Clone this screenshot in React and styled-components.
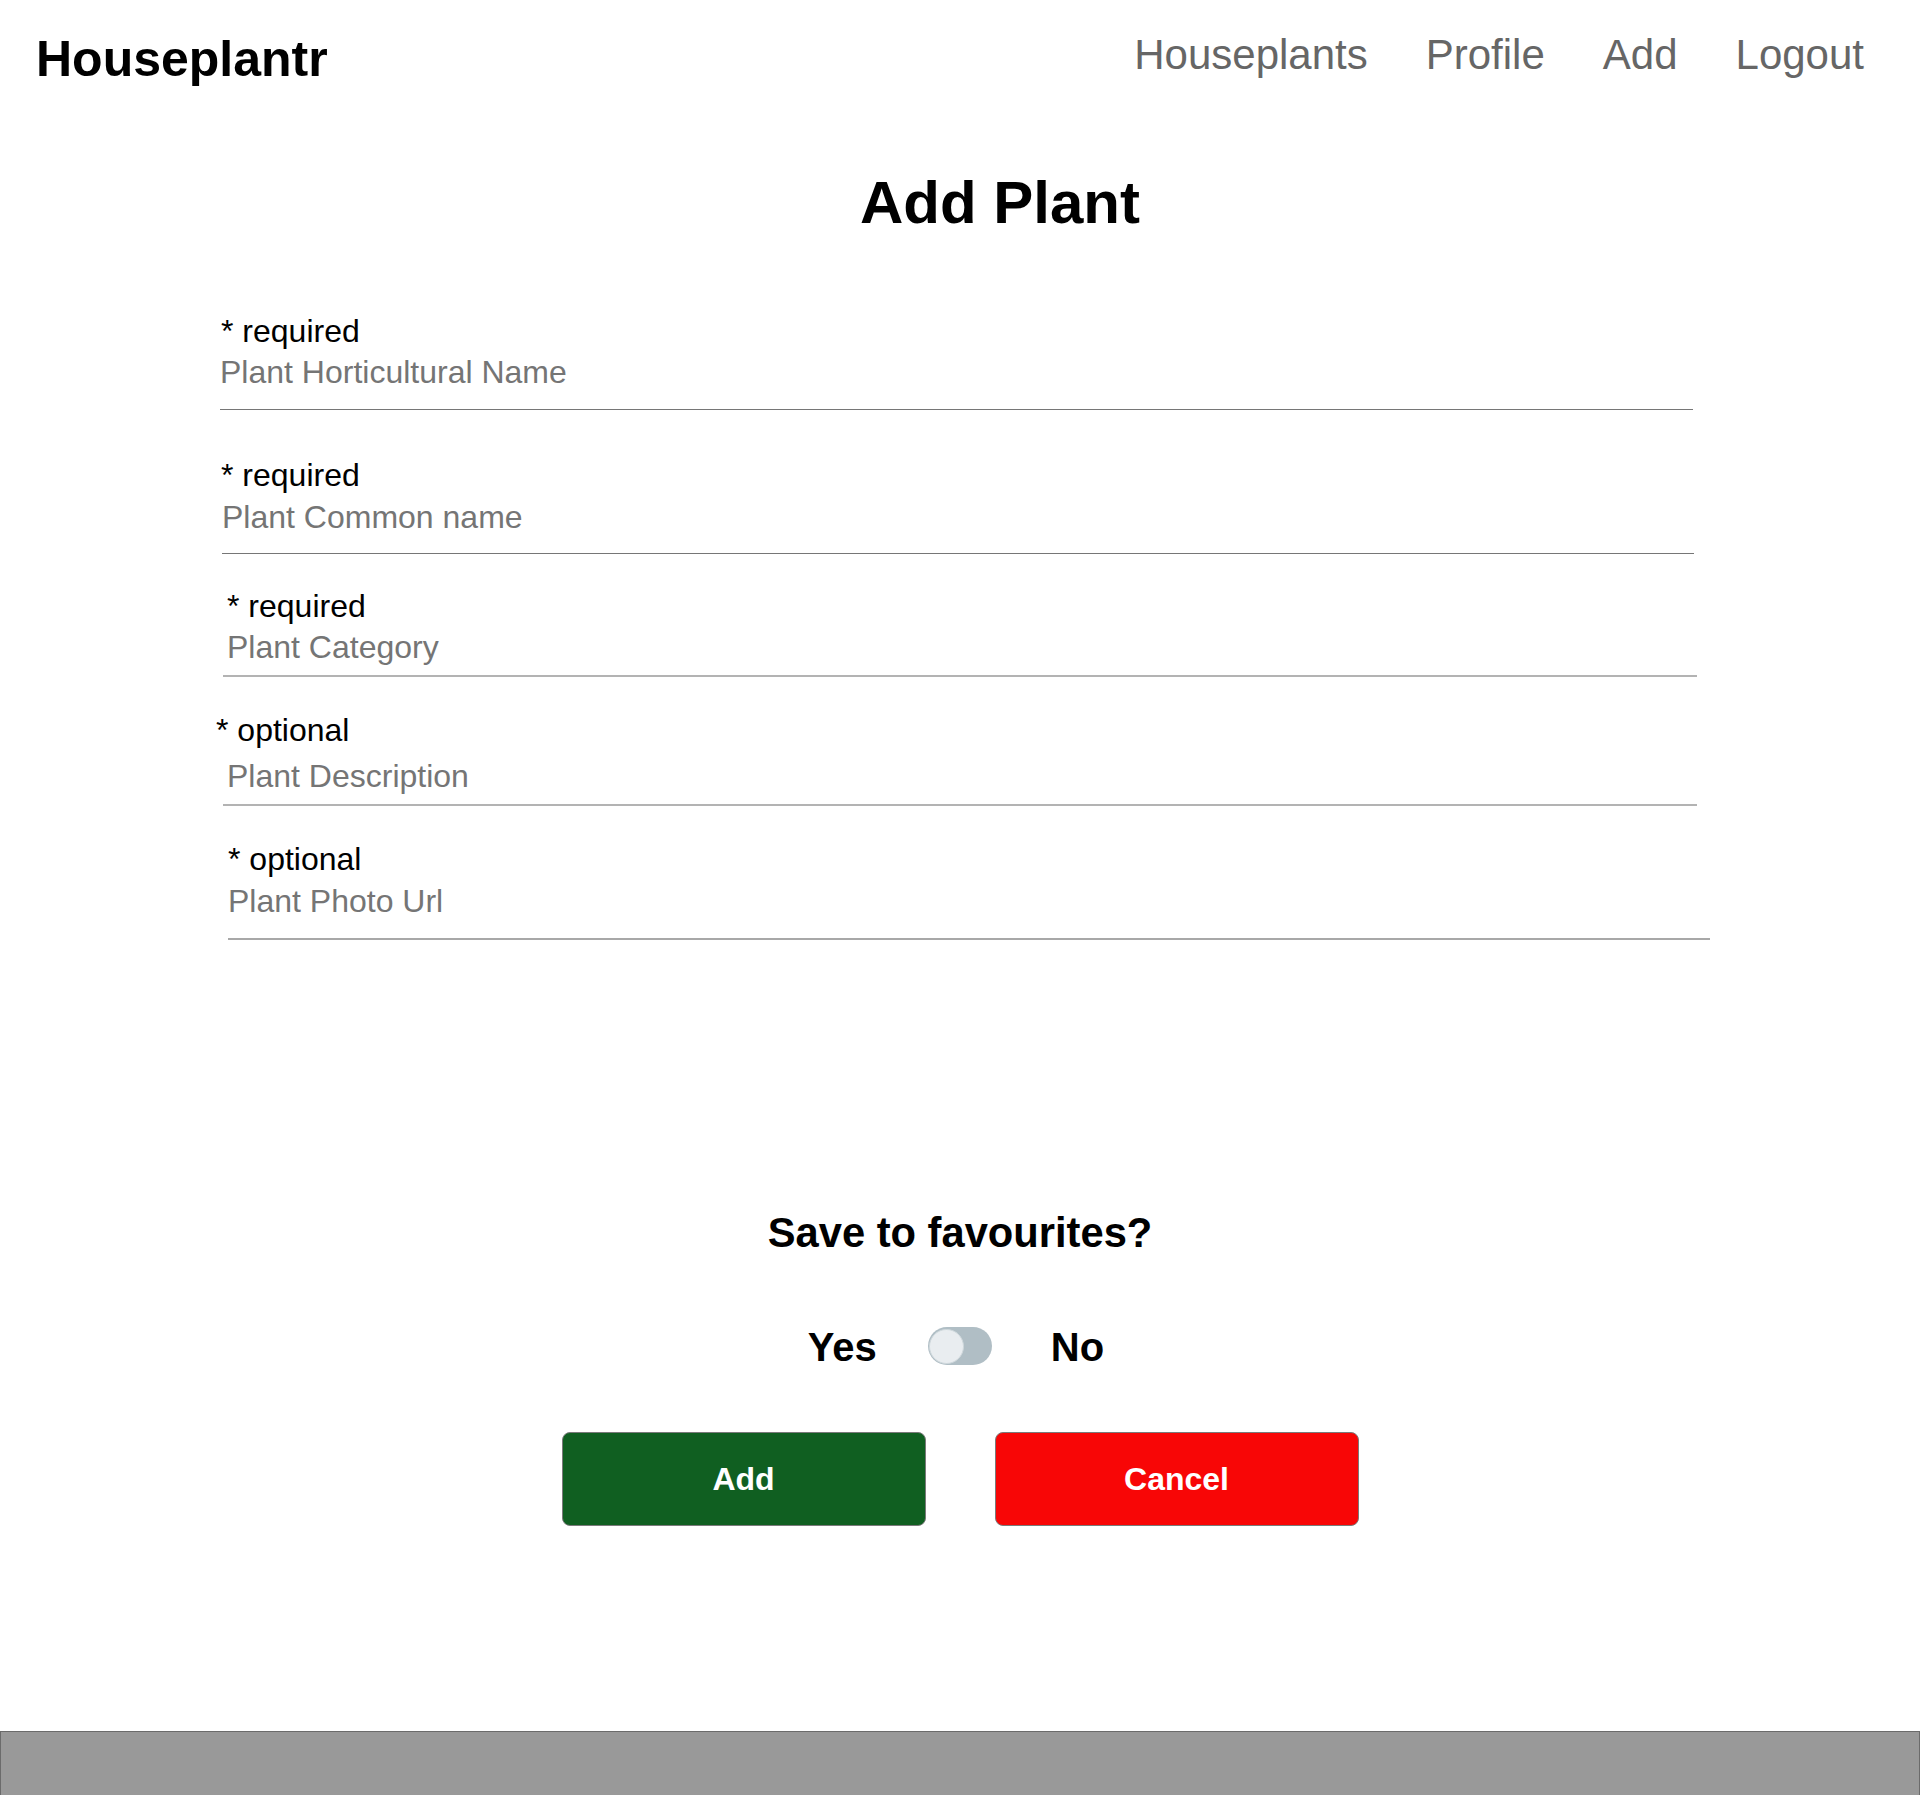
import React, { useState } from "react";
import styled, { createGlobalStyle } from "styled-components";

const GlobalStyle = createGlobalStyle`
  html, body {
    margin: 0;
    padding: 0;
    background: #ffffff;
  }
  body {
    font-family: "Liberation Sans", Arial, sans-serif;
  }
  * {
    box-sizing: border-box;
  }
`;

// 전체 페이지
const Page = styled.div`
  min-height: 100vh;
  display: flex;
  flex-direction: column;
`;

const Header = styled.header`
  display: flex;
  justify-content: space-between;
  align-items: flex-start;
  padding: 30px 56px 0 36px;
`;

const Logo = styled.div`
  font-size: 50px;
  line-height: 58px;
  font-weight: 700;
  color: #000;
`;

const Nav = styled.nav`
  display: flex;
  gap: 58px;
  margin-top: 1px;
`;

const NavLink = styled.a`
  font-size: 42px;
  line-height: 48px;
  color: #666666;
  text-decoration: none;
  cursor: pointer;
`;

const Main = styled.main`
  flex: 1;
  display: flex;
  flex-direction: column;
`;

const Title = styled.h1`
  margin: 80px 0 0;
  padding-left: 80px;
  text-align: center;
  font-size: 60px;
  line-height: 70px;
  font-weight: 700;
  color: #000;
`;

// 입력 폼
const Form = styled.form`
  display: flex;
  flex-direction: column;
  margin-top: 75px;
  padding-left: 220px;
`;

const Field = styled.div`
  display: flex;
  flex-direction: column;
  align-items: flex-start;
  margin-top: ${(props) => props.$top}px;
`;

const Label = styled.label`
  display: block;
  margin-left: ${(props) => props.$x}px;
  font-size: 32px;
  line-height: 36px;
  color: #000;
`;

const Input = styled.input`
  display: block;
  width: ${(props) => props.$w}px;
  height: ${(props) => 36 + props.$pb}px;
  margin: ${(props) => props.$gap}px 0 0 ${(props) => props.$x}px;
  padding: 0 0 ${(props) => props.$pb}px ${(props) => props.$pl}px;
  border: none;
  border-bottom: ${(props) => props.$line};
  outline: none;
  background: transparent;
  font-family: "Liberation Sans", Arial, sans-serif;
  font-size: 32px;
  line-height: 36px;
  color: #000;

  &::placeholder {
    color: #757575;
  }
`;

// 즐겨찾기 영역
const FavTitle = styled.h2`
  margin: 269px 0 0;
  text-align: center;
  font-size: 41.7px;
  line-height: 48px;
  font-weight: 700;
  color: #000;
`;

const ToggleRow = styled.div`
  display: flex;
  justify-content: center;
  align-items: center;
  margin-top: 66px;
  padding-right: 8px;
`;

const Choice = styled.span`
  font-size: 40px;
  line-height: 48px;
  font-weight: 700;
  color: #000;
`;

const Track = styled.button`
  display: flex;
  align-items: center;
  justify-content: ${(props) => (props.$on ? "flex-end" : "flex-start")};
  width: 64px;
  height: 38px;
  margin: -2px ${(props) => props.$right}px 0 ${(props) => props.$left}px;
  padding: 1px;
  border: none;
  border-radius: 19px;
  background: #b0bec5;
  cursor: pointer;
`;

const Knob = styled.span`
  width: 35px;
  height: 35px;
  border-radius: 50%;
  background: #e9edf0;
  border: 1px solid #cfd8dc;
`;

const ButtonRow = styled.div`
  display: flex;
  justify-content: center;
  gap: 69px;
  margin-top: 61px;
`;

const ActionButton = styled.button`
  width: 364px;
  height: 94px;
  border: 1px solid #7a7a7a;
  border-radius: 8px;
  background: ${(props) => props.$bg};
  color: #fff;
  font-family: "Liberation Sans", Arial, sans-serif;
  font-size: 32px;
  font-weight: 700;
  cursor: pointer;
`;

const Footer = styled.footer`
  height: 64px;
  background: #999999;
  border: 1px solid #6b6b6b;
  border-bottom: none;
`;

const fields = [
  { label: "* required", ph: "Plant Horticultural Name", top: 0, lx: 1, ix: 0, w: 1473, pl: 0, gap: 6, pb: 19, line: "1px solid #767676" },
  { label: "* required", ph: "Plant Common name", top: 47, lx: 1, ix: 2, w: 1472, pl: 0, gap: 7, pb: 18, line: "1px solid #767676" },
  { label: "* required", ph: "Plant Category", top: 34, lx: 7, ix: 3, w: 1474, pl: 4, gap: 6, pb: 11, line: "2px solid #b3b3b3" },
  { label: "* optional", ph: "Plant Description", top: 35, lx: -4, ix: 3, w: 1474, pl: 4, gap: 11, pb: 11, line: "2px solid #b3b3b3" },
  { label: "* optional", ph: "Plant Photo Url", top: 35, lx: 8, ix: 8, w: 1482, pl: 0, gap: 7, pb: 20, line: "2px solid #a8a8a8" },
];

const App = () => {
  const [fav, setFav] = useState(false);

  return (
    <Page>
      <GlobalStyle />
      <Header>
        <Logo>Houseplantr</Logo>
        <Nav>
          <NavLink>Houseplants</NavLink>
          <NavLink>Profile</NavLink>
          <NavLink>Add</NavLink>
          <NavLink>Logout</NavLink>
        </Nav>
      </Header>

      <Main>
        <Title>Add Plant</Title>

        <Form onSubmit={(e) => e.preventDefault()}>
          {fields.map((f) => (
            <Field key={f.ph} $top={f.top}>
              <Label $x={f.lx}>{f.label}</Label>
              <Input
                placeholder={f.ph}
                $x={f.ix}
                $w={f.w}
                $pl={f.pl}
                $gap={f.gap}
                $pb={f.pb}
                $line={f.line}
              />
            </Field>
          ))}
        </Form>

        <FavTitle>Save to favourites?</FavTitle>

        <ToggleRow>
          <Choice>Yes</Choice>
          <Track $on={fav} $left={51} $right={59} onClick={() => setFav(!fav)}>
            <Knob />
          </Track>
          <Choice>No</Choice>
        </ToggleRow>

        <ButtonRow>
          <ActionButton $bg="#105f21">Add</ActionButton>
          <ActionButton $bg="#f80606">Cancel</ActionButton>
        </ButtonRow>
      </Main>

      <Footer />
    </Page>
  );
};

export default App;
